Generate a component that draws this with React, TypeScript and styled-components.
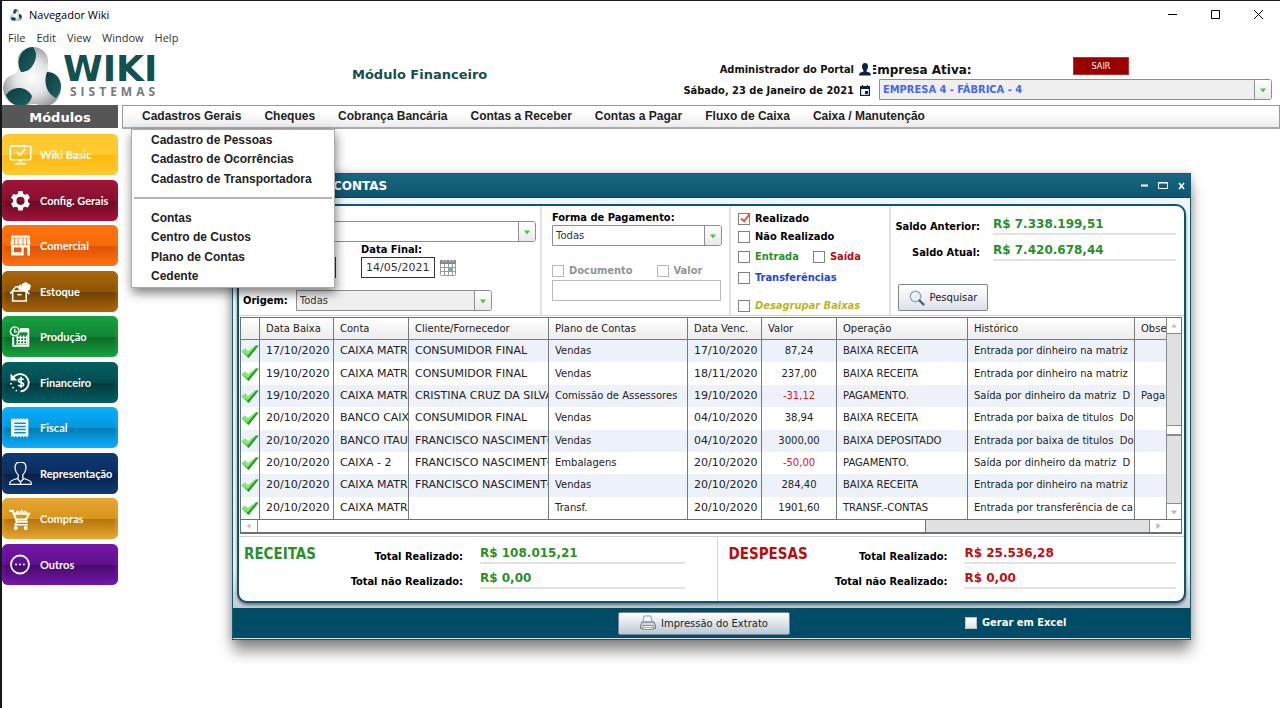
import React from "react";
import styled, { createGlobalStyle, css } from "styled-components";

const verdana = `"DejaVu Sans", Verdana, sans-serif`;
const tahoma = `"DejaVu Sans Condensed", "DejaVu Sans", Tahoma, sans-serif`;
const arial = `"Liberation Sans", Arial, sans-serif`;
const segoe = `"Open Sans", "Segoe UI", sans-serif`;

const GlobalStyle = createGlobalStyle`
  *, *::before, *::after { box-sizing: border-box; }
  body { margin: 0; background: #fff; color: #000; font-family: ${verdana}; font-size: 10px; }
  button, input, select { font: inherit; color: inherit; margin: 0; border-radius: 0; }
  button { cursor: pointer; padding: 0; }
`;

/* ---------- window frame ---------- */

const Frame = styled.div`
  min-height: 100vh;
  display: flex;
  flex-direction: column;
  border-top: 1px solid #1c1c22;
  border-left: 2px solid #15181c;
  overflow: hidden;
`;

const TitleBar = styled.header`
  display: flex;
  align-items: center;
  height: 27px;
  padding: 0 16px 0 8px;
  font-family: ${segoe};
  font-size: 11px;
`;

const AppName = styled.span`
  margin-left: 7px;
  flex: 1;
`;

const WindowButtons = styled.div`
  display: flex;
  gap: 32px;
`;

const GlyphButton = styled.button`
  display: flex;
  border: 0;
  background: none;
`;

const AppMenu = styled.nav`
  display: flex;
  gap: 11px;
  height: 19px;
  align-items: center;
  padding-left: 6px;
`;

const AppMenuItem = styled.button`
  border: 0;
  background: none;
  font-family: ${segoe};
  font-size: 11px;
  line-height: 16px;
  color: #333;
`;

/* ---------- header ---------- */

const Header = styled.div`
  display: flex;
  align-items: flex-start;
  height: 58px;
  padding-right: 8px;
`;

const Brand = styled.div`
  display: flex;
  width: 158px;
`;

const BrandText = styled.div`
  display: flex;
  flex-direction: column;
  padding: 6px 0 0 1px;
`;

const BrandName = styled.span`
  font-family: ${verdana};
  font-weight: bold;
  font-size: 36px;
  line-height: 32px;
  color: #14504f;
`;

const BrandSub = styled.span`
  padding-left: 7px;
  font-family: ${segoe};
  font-weight: bold;
  font-size: 12px;
  line-height: 14px;
  letter-spacing: 4px;
  color: #77797c;
`;

const ModuleTitle = styled.h1`
  flex: 1;
  margin: 0;
  padding: 20px 0 0 192px;
  font-size: 13px;
  line-height: 16px;
  color: #14504f;
`;

const Session = styled.div`
  display: grid;
  grid-template-columns: auto 12px;
  grid-auto-rows: 21px;
  align-items: center;
  justify-items: end;
  column-gap: 5px;
  padding: 12px 2px 0 0;
  background: #fff;
  z-index: 1;
  font-family: ${tahoma};
  font-weight: bold;
  font-size: 11px;
  color: #111;
`;

const Company = styled.div`
  width: 403px;
  margin-left: -4px;
  padding-top: 10px;
`;

const CompanyTop = styled.div`
  display: flex;
  align-items: flex-start;
  justify-content: space-between;
  height: 22px;
  padding-right: 143px;
`;

const CompanyLabel = styled.label`
  padding-top: 6px;
  font-weight: bold;
  font-size: 12px;
  line-height: 14px;
  color: #111;
`;

const ExitButton = styled.button`
  width: 56px;
  height: 18px;
  border: 1px solid #b33;
  background: #9a0000;
  color: #fff;
  font-family: ${tahoma};
  font-size: 9px;
`;

/* ---------- form parts ---------- */

const SelectBox = styled.span<{ $width?: number; $indent?: number; $grey?: boolean }>`
  display: grid;
  grid-template-columns: 1fr 17px;
  width: ${(p) => (p.$width ? `${p.$width}px` : "auto")};
  height: 21px;
  margin-left: ${(p) => p.$indent ?? 0}px;
  border: 1px solid #8c8f92;
  border-radius: 0 3px 3px 0;
  background: ${(p) => (p.$grey ? "#efefef" : "#fff")};
`;

const NativeSelect = styled.select<{ $company?: boolean }>`
  grid-area: 1 / 1 / 2 / 3;
  min-width: 0;
  appearance: none;
  border: 0;
  background: none;
  padding: 0 20px 0 3px;
  color: #333;
  opacity: 1;
  ${(p) =>
    p.$company &&
    css`
      font-family: ${tahoma};
      font-weight: bold;
      font-size: 11px;
      color: #4a66ea;
    `}
`;

const SelectArrow = styled.span`
  grid-area: 1 / 2 / 2 / 3;
  display: flex;
  align-items: center;
  justify-content: center;
  border-left: 1px solid #8c8f92;
  border-radius: 0 2px 2px 0;
  background: linear-gradient(#fff, #e9e9e9);
  pointer-events: none;
`;

const FieldLabel = styled.label<{ $color?: string; $italic?: boolean }>`
  font-family: ${tahoma};
  font-weight: bold;
  font-size: 11px;
  line-height: 14px;
  color: ${(p) => p.$color ?? "#000"};
  font-style: ${(p) => (p.$italic ? "italic" : "normal")};
  white-space: nowrap;
`;

const TextInput = styled.input<{ $width: number; $soft?: boolean }>`
  width: ${(p) => p.$width}px;
  height: 21px;
  padding: 0 4px;
  border: 1px solid ${(p) => (p.$soft ? "#b9bcbf" : "#333")};
  background: #fff;
  font-size: ${(p) => (p.$soft ? 10 : 11)}px;
  color: #333;
`;

const CheckRow = styled.div`
  display: flex;
  align-items: center;
  gap: 5px;
`;

const Tick = styled.input<{ $plain?: boolean }>`
  appearance: none;
  position: relative;
  width: 12px;
  height: 12px;
  border: 1px solid ${(p) => (p.$plain ? "#b8c4c8" : "#7f8285")};
  background: linear-gradient(#fff, ${(p) => (p.$plain ? "#dde3e6" : "#fff")});
  &:disabled { border-color: #b5b8bb; }
  &:checked::after {
    content: "";
    position: absolute;
    left: 4px;
    top: -2px;
    width: 5px;
    height: 10px;
    border: solid #e05a33;
    border-width: 0 2px 2px 0;
    transform: rotate(38deg);
  }
`;

/* ---------- sidebar ---------- */

const Body = styled.div`
  display: flex;
  flex: 1;
  gap: 4px;
`;

const Sidebar = styled.aside`
  width: 116px;
  flex: none;
`;

const SidebarTitle = styled.h2`
  margin: 0 0 6px;
  background: #565656;
  color: #fff;
  font-size: 13px;
  line-height: 23px;
  padding-top: 1px;
  height: 23px;
  text-align: center;
`;

const ModuleList = styled.div`
  display: flex;
  flex-direction: column;
  justify-content: space-between;
  height: 451px;
`;

const ModuleButton = styled.button<{ $edge: string; $top: string; $low: string }>`
  display: flex;
  align-items: center;
  gap: 8px;
  height: 41px;
  padding-left: 7px;
  border: 0;
  border-radius: 6px;
  background: linear-gradient(${(p) => p.$edge}, ${(p) => p.$top} 50%, ${(p) => p.$low} 51%, ${(p) => p.$edge});
  box-shadow: inset 0 0 5px 1px ${(p) => p.$edge};
  font-family: Lato, sans-serif;
  font-weight: bold;
  font-size: 11px;
  color: #fff;
  white-space: nowrap;
  svg { flex: none; }
`;

/* ---------- main menu ---------- */

const Main = styled.main`
  flex: 1;
  min-width: 0;
`;

const MenuBar = styled.nav`
  position: relative;
  display: flex;
  align-items: center;
  gap: 23px;
  height: 24px;
  padding: 0 0 2px 19px;
  border: 1px solid #999;
  border-bottom: 2px solid #aaa;
  background: linear-gradient(#fff 30%, #ececec);
`;

const MenuEntry = styled.button`
  border: 0;
  background: none;
  font-family: ${arial};
  font-weight: bold;
  font-size: 12px;
  line-height: 16px;
  color: #222;
  white-space: nowrap;
`;

const DropMenu = styled.div`
  position: absolute;
  left: 8px;
  top: 23px;
  z-index: 5;
  width: 204px;
  height: 159px;
  padding-bottom: 1px;
  display: flex;
  flex-direction: column;
  border: 1px solid #a9abad;
  background: #fff;
  box-shadow: 1px 5px 10px rgba(0, 0, 0, 0.5);
`;

const DropEntry = styled(MenuEntry)`
  flex: 1;
  padding-left: 19px;
  text-align: left;
`;

const DropRule = styled.div`
  flex: 1;
  display: flex;
  align-items: center;
  padding: 0 2px;
  &::after {
    content: "";
    flex: 1;
    height: 2px;
    background: #b5b5b5;
  }
`;

/* ---------- dialog ---------- */

const Dialog = styled.section`
  margin: 44px 89px 0 110px;
  border: 1px solid #155a70;
  background: #eef4f8;
  box-shadow: 0 12px 14px -1px rgba(0, 0, 0, 0.45), 0 0 8px rgba(0, 0, 0, 0.2);
`;

const DialogTitle = styled.div`
  display: flex;
  align-items: center;
  height: 24px;
  padding: 0 4px 0 100px;
  border-bottom: 1px solid #0b4257;
  background: linear-gradient(#18667f, #0e5670);
  color: #fff;
`;

const DialogName = styled.h2`
  flex: 1;
  margin: 0;
  font-size: 12px;
`;

const DialogGlyphs = styled.div`
  display: flex;
  align-items: center;
  gap: 9px;
`;

const DialogBody = styled.div`
  padding: 6px 4px 5px;
  background: linear-gradient(#eef4f8 90%, #c3cbd0);
`;

const Panel = styled.div`
  border: 2px solid #0d5670;
  border-radius: 10px;
  background: #fff;
  box-shadow: 0 2px 3px rgba(0, 0, 0, 0.45);
`;

const Filters = styled.div`
  display: flex;
  height: 110px;
  border-bottom: 1px solid #ccd0d3;
`;

const Section = styled.div<{ $width?: number; $pad: string }>`
  flex: ${(p) => (p.$width ? `0 0 ${p.$width}px` : "1")};
  display: flex;
  flex-direction: column;
  padding: ${(p) => p.$pad};
  border-right: ${(p) => (p.$width ? "2px solid #dfe2e4" : "0")};
`;

const Line = styled.div<{ $top?: number; $gap?: number; $end?: boolean }>`
  display: flex;
  align-items: ${(p) => (p.$end ? "flex-end" : "center")};
  gap: ${(p) => p.$gap ?? 0}px;
  margin-top: ${(p) => p.$top ?? 0}px;
`;

const Stack = styled.div`
  display: flex;
  flex-direction: column;
`;

const Checks = styled.div`
  display: grid;
  grid-template-rows: 18px 18px 22px 20px 28px;
  align-items: center;
`;

const Balance = styled.div`
  display: grid;
  grid-template-columns: 82px 1fr;
  grid-auto-rows: 26px;
  column-gap: 13px;
  justify-items: end;
`;

const Amount = styled.output<{ $color: string }>`
  justify-self: stretch;
  height: 19px;
  border-bottom: 2px solid #e0e2e3;
  font-weight: bold;
  font-size: 12px;
  line-height: 17px;
  color: ${(p) => p.$color};
`;

const AmountLabel = styled(FieldLabel)`
  padding-top: 4px;
`;

const SoftButton = styled.button<{ $width: number; $height: number; $tone: string }>`
  display: flex;
  align-items: center;
  justify-content: center;
  gap: 5px;
  width: ${(p) => p.$width}px;
  height: ${(p) => p.$height}px;
  border: 1px solid #7e8496;
  border-radius: 2px;
  background: linear-gradient(#fff, ${(p) => p.$tone});
  color: #222;
`;

/* ---------- grid ---------- */

const GridFrame = styled.div`
  display: grid;
  grid-template-columns: 1fr 15px;
  margin: 1px 2px 0 1px;
  border: 1px solid #6d7072;
  border-bottom-width: 2px;
`;

const Clip = styled.div`
  overflow: hidden;
`;

const DataTable = styled.table`
  width: 100%;
  height: 201px;
  table-layout: fixed;
  border-collapse: separate;
  border-spacing: 0;
  color: #222;
`;

const Col = styled.col<{ $width?: number }>`
  width: ${(p) => (p.$width ? `${p.$width}px` : "auto")};
`;

const Th = styled.th`
  height: 22px;
  padding: 0 0 0 6px;
  border-right: 1px solid #77797b;
  border-bottom: 1px solid #77797b;
  background: linear-gradient(#fff, #ebeceb);
  font-weight: normal;
  text-align: left;
  white-space: nowrap;
  overflow: hidden;
  &:last-child { border-right: 0; }
`;

const Tr = styled.tr`
  &:nth-child(odd) { background: #edf2fa; }
`;

const Td = styled.td<{ $caps?: boolean; $center?: boolean; $red?: boolean }>`
  padding: 0 0 0 ${(p) => (p.$center ? 0 : 6)}px;
  border-right: 1px solid #77797b;
  font-size: ${(p) => (p.$caps ? 11 : 10)}px;
  line-height: 14px;
  text-align: ${(p) => (p.$center ? "center" : "left")};
  color: ${(p) => (p.$red ? "#e0141e" : "inherit")};
  white-space: pre;
  overflow: hidden;
  svg { display: block; margin: 0 auto; }
  &:last-child { border-right: 0; }
`;

const VScroll = styled.div`
  display: grid;
  grid-template-rows: 16px 91px 11px 1fr 16px;
  border-left: 1px solid #8a8d8f;
  background: #dfe1e2;
`;

const HScroll = styled.div`
  display: grid;
  grid-template-columns: 17px 669fr 223fr 17px;
  height: 13px;
  border-top: 1px solid #6d7072;
  background: #dfe1e2;
`;

const ScrollEnd = styled.button<{ $side: string }>`
  display: flex;
  align-items: center;
  justify-content: center;
  border: 0;
  border-${(p) => p.$side}: 1px solid #8a8d8f;
  background: #fff;
`;

const VThumb = styled.div`
  border: solid #8a8d8f;
  border-width: 1px 0 2px;
  background: #fff;
`;

const HThumb = styled.div`
  border-right: 1px solid #6d7072;
  background: #fff;
`;

const Corner = styled.div`
  border-top: 1px solid #6d7072;
`;

/* ---------- totals and footer ---------- */

const Totals = styled.div`
  display: grid;
  grid-template-columns: 480fr 466fr;
  height: 65px;
  margin-top: 2px;
  border-top: 1px solid #ccd0d3;
`;

const TotalGroup = styled.div<{ $pad: string; $rule?: boolean }>`
  display: grid;
  grid-template-columns: 110px 109px 1fr;
  grid-template-rows: 25px 24px;
  align-items: start;
  padding: ${(p) => p.$pad};
  border-right: ${(p) => (p.$rule ? "1px solid #d5d8da" : "0")};
`;

const TotalTitle = styled.h3<{ $color: string }>`
  margin: 0;
  font-family: ${tahoma};
  font-size: 15px;
  line-height: 18px;
  color: ${(p) => p.$color};
`;

const TotalLabel = styled(AmountLabel)`
  grid-column: 2;
  justify-self: end;
  padding-top: 5px;
`;

const TotalAmount = styled(Amount)`
  margin-left: 17px;
`;

const Footer = styled.footer`
  display: grid;
  grid-template-columns: 385px 1fr 225px;
  align-items: center;
  height: 31px;
  border-bottom: 1px solid #cfe0e8;
  background: #004c66;
`;

/* ---------- drawings ---------- */

const BrandMark = ({ size }: { size: number }) => (
  <svg width={size} height={size} viewBox="0 0 60 60" aria-hidden="true">
    <defs>
      <radialGradient id="silver" cx="50%" cy="52%" r="58%">
        <stop offset="0" stopColor="#fff" />
        <stop offset="0.5" stopColor="#e4e4e6" />
        <stop offset="1" stopColor="#8f9194" />
      </radialGradient>
      <linearGradient id="teal" x1="0" y1="0" x2="1" y2="1">
        <stop offset="0" stopColor="#0c3c3e" />
        <stop offset="1" stopColor="#1d6361" />
      </linearGradient>
    </defs>
    <path
      d="M31 0c9 0 16 7 15 16-1 5-1 7 3 9 7 3 11 9 10 17-1 9-7 16-14 17-6 0-9-2-13-2-5 0-8 2-13 2C9 59 2 51 1 42c0-7 3-12 9-14 5-2 7-4 6-9C13 8 21 0 31 0z"
      fill="url(#silver)"
    />
    <path d="M31 0c4 5 4 11 0 18-3 5-7 7-12 7-6-10-1-24 12-25z" fill="url(#teal)" />
    <path d="M45 25c8 0 13 5 14 14 0 5-2 9-5 12-9-4-13-15-9-26z" fill="url(#teal)" />
    <path d="M4 48c6-9 20-10 26 1-1 5-4 8-8 10C14 60 7 56 4 48z" fill="url(#teal)" />
  </svg>
);

const Triangle = ({ turn = 0, color }: { turn?: number; color: string }) => (
  <svg width="8" height="8" viewBox="0 0 8 8" aria-hidden="true">
    <path d="M1 2.500h6L4 6.500z" fill={color} transform={`rotate(${turn} 4 4)`} />
  </svg>
);

const GreenCheck = () => (
  <svg width="18" height="16" viewBox="0 0 18 16" aria-hidden="true">
    <path d="M.5 8.500l3.500-3 3 3L15 2l2.500.5L7.500 15z" fill="#4cc83a" />
    <path d="M.5 8.500l3.500-3 3 3L15 2l1 .2L7 12z" fill="#86e873" />
    <path d="M17.500 2.500l-10 12.500-1.500-1.800L15 3z" fill="#2a9a2a" />
  </svg>
);

const CalendarIcon = () => (
  <svg width="16" height="17" viewBox="0 0 16 17" aria-hidden="true">
    <rect x="0.500" y="1.500" width="15" height="15" rx="1" fill="#fff" stroke="#999" />
    <path d="M0 1h16v4H0z" fill="#85888c" />
    <path d="M3 0v3M6 0v3M10 0v3M13 0v3" stroke="#ddd" />
    <path d="M1 8.500h14M1 12.500h14M4.500 5v11M8.500 5v11M12.500 5v11" stroke="#999" />
    <path d="M9 9h3v3H9z" fill="#7fa5d8" />
  </svg>
);

const Magnifier = () => (
  <svg width="16" height="16" viewBox="0 0 16 16" aria-hidden="true">
    <circle cx="6.500" cy="6.500" r="5.300" fill="#e6f0fa" stroke="#9aa7ba" strokeWidth="1.400" />
    <path d="M10.500 10.500l4 4" stroke="#555c6a" strokeWidth="2.400" strokeLinecap="round" />
    <path d="M3.500 6a3 3 0 0 1 3-2.600" stroke="#fff" fill="none" />
  </svg>
);

const PrinterIcon = () => (
  <svg width="16" height="16" viewBox="0 0 16 16" aria-hidden="true">
    <path d="M4 1h7l1 6H3z" fill="#f4faff" stroke="#7aa5d6" />
    <path d="M2 7h12l1.500 4v2.500H.5V11z" fill="#d5d8da" stroke="#74787c" />
    <path d="M3 10.500h10v4H3z" fill="#f7f7f7" stroke="#8a8d90" />
    <path d="M4 12.500h8" stroke="#aaa" />
  </svg>
);

const UserGlyph = () => (
  <svg width="12" height="13" viewBox="0 0 12 13" aria-hidden="true">
    <path d="M6 0c2 0 3 1.500 3 3.500S8 7 7.500 7.500v1c2 .6 4 1 4.300 2.500v1.500H.2V11C.5 9.500 2.500 9.100 4.500 8.500v-1C4 7 3 5.500 3 3.500S4 0 6 0z" fill="#0c2145" />
  </svg>
);

const DateGlyph = () => (
  <svg width="12" height="11" viewBox="0 0 10 11" aria-hidden="true">
    <path d="M2 0h1v1h4V0h1v1h2v10H0V1h2z" fill="#0c2145" />
    <path d="M1.200 4h7.600v5.800H1.200z" fill="#fff" />
    <path d="M5 6h3v3H5z" fill="#0c2145" />
  </svg>
);

const art: Record<string, React.ReactNode> = {
  basic: (
    <g fill="none" stroke="#fff">
      <rect x="1.200" y="3" width="19.600" height="13" rx="1.500" strokeWidth="1.500" />
      <path d="M7.500 8.500l3 3 5-6" strokeWidth="1.600" />
      <path d="M6 19.800h10" strokeWidth="1.800" />
      <path d="M11 16v2" strokeWidth="3" />
    </g>
  ),
  gear: (
    <path
      fillRule="evenodd"
      fill="#fff"
      d="M9 2h4l.7 2.700 1.600.9 2.700-.7 2 3.500-2 2v1.800l2 2-2 3.400-2.700-.7-1.600.9L13 20.500H9l-.7-2.700-1.600-.9-2.700.7-2-3.400 2-2v-1.800l-2-2 2-3.500 2.700.7 1.600-.9zM11 7.400a3.900 3.900 0 1 0 0 7.800 3.900 3.900 0 0 0 0-7.800z"
    />
  ),
  store: (
    <g fill="#fff">
      <path d="M2 1.500h18v2H2z" />
      <path d="M2 4h2.700v5.500c0 1-3.200 1-3.200 0zM5.500 4h2.700v5.500c0 1-2.700 1-2.700 0zM9 4h4v5.500c0 1-4 1-4 0zM13.800 4h2.700v5.500c0 1-2.700 1-2.700 0zM17.300 4H20l.5 5.500c0 1-3.200 1-3.200 0z" />
      <path fillRule="evenodd" d="M2 10.500h18v10H2zM4.500 13v4.500H12V13zm9.500 0v7.500h3.500V13z" />
    </g>
  ),
  box: (
    <g fill="none" stroke="#fff" strokeWidth="1.500">
      <path d="M3.500 10.500h13v9.500h-13z" />
      <path d="M3.500 10.500L1 13M3.500 10l3-3.500h4M16.500 10.500l3 3" />
      <path d="M8 14h4" />
      <path d="M12 4l4-2 5 3-1 4-4 3-4-3z" fill="#fff" stroke="none" />
      <path d="M8 7l3-3 3 6h-4z" fill="#fff" stroke="none" />
    </g>
  ),
  production: (
    <g fill="none" stroke="#fff">
      <path d="M4 11.500v8.500h14.500V4" strokeWidth="1.800" />
      <path d="M10.500 5h8.500" strokeWidth="4" />
      <path d="M7 12h10M7 15h10M7 18h10M8 10v9M11 10v9M14 10v9M17 10v9" strokeWidth="1.300" />
      <circle cx="5.500" cy="6" r="4.200" strokeWidth="1.400" />
      <path d="M5.500 3.500V6.500H8" strokeWidth="1.200" />
    </g>
  ),
  money: (
    <g fill="none" stroke="#fff">
      <path d="M4 6a8.300 8.300 0 1 1 7 13.500" strokeWidth="1.700" />
      <path d="M1.500 2.500v6.500h6.500z" fill="#fff" stroke="none" />
      <path d="M2 11.500v1.500M3.500 15.500l.8 1M6.500 18.500l1 .6" strokeWidth="1.800" />
      <path d="M14 8.500c-.5-1.300-5-1.600-5 .6 0 2.600 5 1.200 5 3.800 0 2.200-4.500 2-5.200.4M11.500 5.500v10.500" strokeWidth="1.500" />
    </g>
  ),
  receipt: (
    <g>
      <path d="M2 2l1.500 1.500L5 2l1.500 1.500L8 2l1.500 1.500L11 2l1.500 1.500L14 2l1.500 1.500L17 2l1.500 1.500V19L17 20.500 15.500 19 14 20.500 12.500 19 11 20.500 9.500 19 8 20.500 6.500 19 5 20.500 3.500 19 2 20.500z" fill="#fff" />
      <path d="M5 7h11M5 10h11M5 13h11M5 16h11" stroke="#0590cf" strokeWidth="1.400" />
    </g>
  ),
  person: (
    <g fill="none" stroke="#fff" strokeWidth="1.200">
      <path d="M11 0c3.600 0 5.600 2.300 5.200 6-.3 3-1.500 5-3 6.300v3c2.500 1.400 8 2 8 4.500v1.600H.8v-1.600c0-2.500 5.500-3.100 8-4.500v-3C7.300 11 6.100 9 5.800 6 5.400 2.300 7.400 0 11 0z" />
      <path d="M8 16l3 3 3-3M11 19v3" />
    </g>
  ),
  cart: (
    <g fill="none" stroke="#fff">
      <path d="M0 3.500h3.500l4 10.500H18" strokeWidth="1.900" />
      <path d="M4.500 6.500H19l-2.500 5.500H7" strokeWidth="1.900" />
      <path d="M7.500 14L6 17h12" strokeWidth="1.600" />
      <path d="M6 5.500l2-2.500 2 1.500 2-2 2 2 2-1.500 1.500 2.500z" fill="#fff" stroke="none" />
      <circle cx="6.500" cy="20" r="1.900" fill="#fff" stroke="none" />
      <circle cx="16" cy="20" r="1.900" fill="#fff" stroke="none" />
    </g>
  ),
  more: (
    <g>
      <circle cx="10.500" cy="11" r="8.600" fill="none" stroke="#fff" strokeWidth="1.700" />
      <circle cx="6.800" cy="11" r="1" fill="#fff" />
      <circle cx="10.500" cy="11" r="1" fill="#fff" />
      <circle cx="14.200" cy="11" r="1" fill="#fff" />
    </g>
  ),
};

/* ---------- data ---------- */

const modules = [
  { label: "Wiki Basic", icon: "basic", edge: "#ffc933", top: "#ffcb2e", low: "#fdb90a" },
  { label: "Config. Gerais", icon: "gear", edge: "#a31438", top: "#86102f", low: "#690a22" },
  { label: "Comercial", icon: "store", edge: "#ff7210", top: "#f96a08", low: "#dd5200" },
  { label: "Estoque", icon: "box", edge: "#a9660a", top: "#8f5405", low: "#6e3f02" },
  { label: "Produção", icon: "production", edge: "#17a13f", top: "#108536", low: "#0a6a26" },
  { label: "Financeiro", icon: "money", edge: "#035f63", top: "#034c50", low: "#02383b" },
  { label: "Fiscal", icon: "receipt", edge: "#0aaeff", top: "#0697dd", low: "#0279b2" },
  { label: "Representação", icon: "person", edge: "#0e3a74", top: "#0b2d5e", low: "#082046" },
  { label: "Compras", icon: "cart", edge: "#e6a632", top: "#d8951c", low: "#b4740a" },
  { label: "Outros", icon: "more", edge: "#7416a8", top: "#5f108c", low: "#460a69" },
];

const menus = ["Cadastros Gerais", "Cheques", "Cobrança Bancária", "Contas a Receber", "Contas a Pagar", "Fluxo de Caixa", "Caixa / Manutenção"];
const records = ["Cadastro de Pessoas", "Cadastro de Ocorrências", "Cadastro de Transportadora"];
const accounts = ["Contas", "Centro de Custos", "Plano de Contas", "Cedente"];

const columns = [
  { name: "", width: 19 },
  { name: "Data Baixa", width: 74 },
  { name: "Conta", width: 75 },
  { name: "Cliente/Fornecedor", width: 140 },
  { name: "Plano de Contas", width: 139 },
  { name: "Data Venc.", width: 74 },
  { name: "Valor", width: 75 },
  { name: "Operação", width: 131 },
  { name: "Histórico", width: 167 },
  { name: "Observação" },
];

const rows = [
  ["17/10/2020", "CAIXA MATRIZ", "CONSUMIDOR FINAL", "Vendas", "17/10/2020", "87,24", "BAIXA RECEITA", "Entrada por dinheiro na matriz", ""],
  ["19/10/2020", "CAIXA MATRIZ", "CONSUMIDOR FINAL", "Vendas", "18/11/2020", "237,00", "BAIXA RECEITA", "Entrada por dinheiro na matriz", ""],
  ["19/10/2020", "CAIXA MATRIZ", "CRISTINA CRUZ DA SILVA", "Comissão de Assessores", "19/10/2020", "-31,12", "PAGAMENTO.", "Saída por dinheiro da matriz  D", "Pagamento"],
  ["20/10/2020", "BANCO CAIXA", "CONSUMIDOR FINAL", "Vendas", "04/10/2020", "38,94", "BAIXA RECEITA", "Entrada por baixa de titulos  Do", ""],
  ["20/10/2020", "BANCO ITAU", "FRANCISCO NASCIMENTO", "Vendas", "04/10/2020", "3000,00", "BAIXA DEPOSITADO", "Entrada por baixa de titulos  Do", ""],
  ["20/10/2020", "CAIXA - 2", "FRANCISCO NASCIMENTO", "Embalagens", "20/10/2020", "-50,00", "PAGAMENTO.", "Saída por dinheiro da matriz  D", ""],
  ["20/10/2020", "CAIXA MATRIZ", "FRANCISCO NASCIMENTO", "Vendas", "20/10/2020", "284,40", "BAIXA RECEITA", "Entrada por dinheiro na matriz", ""],
  ["20/10/2020", "CAIXA MATRIZ", "", "Transf.", "20/10/2020", "1901,60", "TRANSF.-CONTAS", "Entrada por transferência de ca", ""],
];

const capsColumns = [0, 1, 2, 4];

/* ---------- composed parts ---------- */

type PickProps = { id?: string; label?: string; value: string; width?: number; indent?: number; grey?: boolean; company?: boolean };

const Pick = ({ id, label, value, width, indent, grey, company }: PickProps) => (
  <SelectBox $width={width} $indent={indent} $grey={grey}>
    <NativeSelect id={id} aria-label={label} $company={company} defaultValue={value}>
      <option value={value}>{value}</option>
    </NativeSelect>
    <SelectArrow>
      <Triangle color="#45c832" />
    </SelectArrow>
  </SelectBox>
);

type CheckProps = { id: string; label: string; color?: string; italic?: boolean; checked?: boolean; disabled?: boolean; plain?: boolean };

const Check = ({ id, label, color, italic, checked, disabled, plain }: CheckProps) => (
  <CheckRow>
    <Tick type="checkbox" id={id} defaultChecked={checked} disabled={disabled} $plain={plain} />
    <FieldLabel htmlFor={id} $color={color} $italic={italic}>
      {label}
    </FieldLabel>
  </CheckRow>
);

const green = "#2a8f2a";
const red = "#b90d0d";

type TotalsProps = { title: string; color: string; valueColor: string; done: string; pending: string; pad: string; rule?: boolean };

const TotalsBlock = ({ title, color, valueColor, done, pending, pad, rule }: TotalsProps) => (
  <TotalGroup $pad={pad} $rule={rule}>
    <TotalTitle $color={color}>{title}</TotalTitle>
    <TotalLabel htmlFor={`${title}-done`}>Total Realizado:</TotalLabel>
    <TotalAmount id={`${title}-done`} $color={valueColor}>{done}</TotalAmount>
    <TotalLabel htmlFor={`${title}-pending`}>Total não Realizado:</TotalLabel>
    <TotalAmount id={`${title}-pending`} $color={valueColor}>{pending}</TotalAmount>
  </TotalGroup>
);

export default function App() {
  return (
    <Frame>
      <GlobalStyle />
      <TitleBar>
        <BrandMark size={12} />
        <AppName>Navegador Wiki</AppName>
        <WindowButtons>
          <GlyphButton aria-label="Minimizar">
            <svg width="11" height="11" viewBox="0 0 11 11"><path d="M1 5.500h9" stroke="#000" /></svg>
          </GlyphButton>
          <GlyphButton aria-label="Maximizar">
            <svg width="11" height="11" viewBox="0 0 11 11"><path d="M1.500 1.500h8v8h-8z" fill="none" stroke="#000" /></svg>
          </GlyphButton>
          <GlyphButton aria-label="Fechar">
            <svg width="11" height="11" viewBox="0 0 11 11"><path d="M1 1l9 9M10 1l-9 9" stroke="#000" /></svg>
          </GlyphButton>
        </WindowButtons>
      </TitleBar>
      <AppMenu>
        {["File", "Edit", "View", "Window", "Help"].map((m) => (
          <AppMenuItem key={m}>{m}</AppMenuItem>
        ))}
      </AppMenu>

      <Header>
        <Brand>
          <BrandMark size={60} />
          <BrandText>
            <BrandName>WIKI</BrandName>
            <BrandSub>SISTEMAS</BrandSub>
          </BrandText>
        </Brand>
        <ModuleTitle>Módulo Financeiro</ModuleTitle>
        <Session>
          <span>Administrador do Portal</span>
          <UserGlyph />
          <span>Sábado, 23 de Janeiro de 2021</span>
          <DateGlyph />
        </Session>
        <Company>
          <CompanyTop>
            <CompanyLabel htmlFor="company">Empresa Ativa:</CompanyLabel>
            <ExitButton>SAIR</ExitButton>
          </CompanyTop>
          <Pick id="company" value="EMPRESA 4 - FÁBRICA - 4" indent={10} grey company />
        </Company>
      </Header>

      <Body>
        <Sidebar>
          <SidebarTitle>Módulos</SidebarTitle>
          <ModuleList>
            {modules.map((m) => (
              <ModuleButton key={m.label} $edge={m.edge} $top={m.top} $low={m.low}>
                <svg width="23" height="23" viewBox="0 0 22 22" aria-hidden="true">{art[m.icon]}</svg>
                {m.label}
              </ModuleButton>
            ))}
          </ModuleList>
        </Sidebar>

        <Main>
          <MenuBar>
            {menus.map((m) => (
              <MenuEntry key={m}>{m}</MenuEntry>
            ))}
            <DropMenu>
              {records.map((m) => (
                <DropEntry key={m}>{m}</DropEntry>
              ))}
              <DropRule />
              {accounts.map((m) => (
                <DropEntry key={m}>{m}</DropEntry>
              ))}
            </DropMenu>
          </MenuBar>

          <Dialog>
            <DialogTitle>
              <DialogName>CONTAS</DialogName>
              <DialogGlyphs>
                <GlyphButton aria-label="Minimizar janela">
                  <svg width="9" height="9" viewBox="0 0 9 9"><path d="M1 4.500h7" stroke="#fff" strokeWidth="2" /></svg>
                </GlyphButton>
                <GlyphButton aria-label="Maximizar janela">
                  <svg width="10" height="9" viewBox="0 0 10 9"><path d="M.5 1.500h9v6h-9zM0 2h10" fill="none" stroke="#fff" /></svg>
                </GlyphButton>
                <GlyphButton aria-label="Fechar janela">
                  <svg width="9" height="9" viewBox="0 0 9 9"><path d="M2 2l5 6M7 2L2 8" stroke="#fff" strokeWidth="1.600" /></svg>
                </GlyphButton>
              </DialogGlyphs>
            </DialogTitle>

            <DialogBody>
              <Panel>
                <Filters>
                  <Section $width={303} $pad="15px 4px 0 4px">
                    <Pick label="Conta" value=" " />
                    <Line $end $top={1} $gap={25}>
                      <TextInput $width={93} aria-label="Data Inicial" />
                      <Stack>
                        <FieldLabel htmlFor="end-date">Data Final:</FieldLabel>
                        <Line $gap={5}>
                          <TextInput id="end-date" $width={74} defaultValue="14/05/2021" />
                          <CalendarIcon />
                        </Line>
                      </Stack>
                    </Line>
                    <Line $top={12} $gap={8}>
                      <FieldLabel htmlFor="origin">Origem:</FieldLabel>
                      <Pick id="origin" value="Todas" width={196} grey />
                    </Line>
                  </Section>

                  <Section $width={188} $pad="5px 7px 0 10px">
                    <FieldLabel htmlFor="payment">Forma de Pagamento:</FieldLabel>
                    <Pick id="payment" value="Todas" width={170} />
                    <Line $top={18} $gap={24}>
                      <Check id="by-document" label="Documento" color="#929497" disabled />
                      <Check id="by-value" label="Valor" color="#929497" disabled />
                    </Line>
                    <Line $top={2}>
                      <TextInput $width={169} $soft aria-label="Documento ou valor" disabled />
                    </Line>
                  </Section>

                  <Section $width={160} $pad="4px 0 0 7px">
                    <Checks>
                      <Check id="done" label="Realizado" checked />
                      <Check id="not-done" label="Não Realizado" />
                      <Line $gap={14}>
                        <Check id="incoming" label="Entrada" color={green} />
                        <Check id="outgoing" label="Saída" color={red} />
                      </Line>
                      <Check id="transfers" label="Transferências" color="#2345d8" />
                      <Line $top={8}>
                        <Check id="ungroup" label="Desagrupar Baixas" color="#b9b428" italic />
                      </Line>
                    </Checks>
                  </Section>

                  <Section $pad="10px 8px 0 7px">
                    <Balance>
                      <AmountLabel htmlFor="previous">Saldo Anterior:</AmountLabel>
                      <Amount id="previous" $color={green}>R$ 7.338.199,51</Amount>
                      <AmountLabel htmlFor="current">Saldo Atual:</AmountLabel>
                      <Amount id="current" $color={green}>R$ 7.420.678,44</Amount>
                    </Balance>
                    <Line $top={16}>
                      <SoftButton $width={90} $height={27} $tone="#dfe0ee">
                        <Magnifier />
                        Pesquisar
                      </SoftButton>
                    </Line>
                  </Section>
                </Filters>

                <GridFrame>
                  <Clip>
                    <DataTable>
                      <colgroup>
                        {columns.map((c) => (
                          <Col key={c.name} $width={c.width} />
                        ))}
                      </colgroup>
                      <thead>
                        <tr>
                          {columns.map((c) => (
                            <Th key={c.name}>{c.name}</Th>
                          ))}
                        </tr>
                      </thead>
                      <tbody>
                        {rows.map((r, i) => (
                          <Tr key={i}>
                            <Td $center><GreenCheck /></Td>
                            {r.map((v, c) => (
                              <Td key={c} $caps={capsColumns.includes(c)} $center={c === 5} $red={c === 5 && v.startsWith("-")}>
                                {v}
                              </Td>
                            ))}
                          </Tr>
                        ))}
                      </tbody>
                    </DataTable>
                  </Clip>
                  <VScroll>
                    <ScrollEnd $side="bottom" aria-label="Rolar para cima"><Triangle turn={180} color="#b3c7de" /></ScrollEnd>
                    <div />
                    <VThumb />
                    <div />
                    <ScrollEnd $side="top" aria-label="Rolar para baixo"><Triangle color="#9dbbe0" /></ScrollEnd>
                  </VScroll>
                  <HScroll>
                    <ScrollEnd $side="right" aria-label="Rolar para a esquerda"><Triangle turn={90} color="#b3c7de" /></ScrollEnd>
                    <HThumb />
                    <div />
                    <ScrollEnd $side="left" aria-label="Rolar para a direita"><Triangle turn={270} color="#9dbbe0" /></ScrollEnd>
                  </HScroll>
                  <Corner />
                </GridFrame>

                <Totals>
                  <TotalsBlock title="RECEITAS" color={green} valueColor={green} done="R$ 108.015,21" pending="R$ 0,00" pad="8px 32px 0 5px" rule />
                  <TotalsBlock title="DESPESAS" color={red} valueColor="#c01010" done="R$ 25.536,28" pending="R$ 0,00" pad="8px 8px 0 10px" />
                </Totals>
              </Panel>
            </DialogBody>

            <Footer>
              <span />
              <SoftButton $width={172} $height={23} $tone="#b9cad6">
                <PrinterIcon />
                Impressão do Extrato
              </SoftButton>
              <Check id="excel" label="Gerar em Excel" color="#fff" plain />
            </Footer>
          </Dialog>
        </Main>
      </Body>
    </Frame>
  );
}
